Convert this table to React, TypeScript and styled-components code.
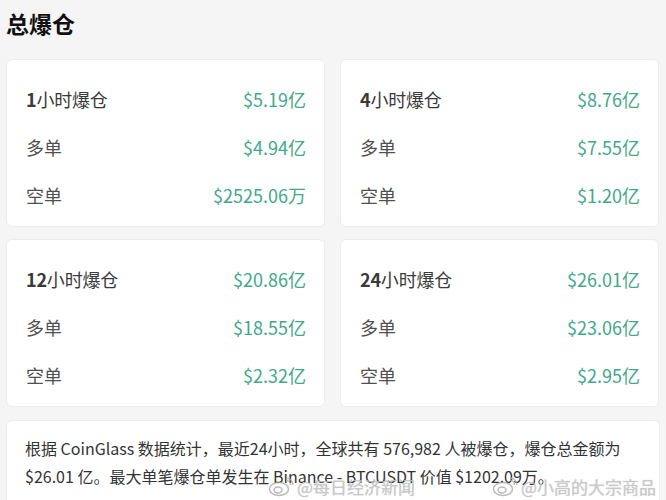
import styled, { createGlobalStyle } from "styled-components";

const GlobalStyle = createGlobalStyle`
  html, body {
    margin: 0;
    padding: 0;
    background: #f5f5f6;
  }
  body {
    font-family: "Noto Sans", "Noto Sans CJK SC", sans-serif;
  }
`;

const Page = styled.div`
  position: relative;
  width: 666px;
  height: 500px;
  overflow: hidden;
  padding: 0 6px;
  box-sizing: border-box;
`;

const Title = styled.h1`
  margin: 0;
  padding-top: 8px;
  height: 59px;
  box-sizing: border-box;
  font-size: 23px;
  font-weight: 700;
  line-height: 30px;
  color: #111;
  font-family: "Noto Sans CJK SC", sans-serif;
`;

const Grid = styled.div`
  display: grid;
  grid-template-columns: 319px 319px;
  column-gap: 15px;
  row-gap: 12px;
`;

const Card = styled.div`
  background: #fff;
  border: 1px solid #ececec;
  border-radius: 6px;
  height: 168px;
  box-sizing: border-box;
  padding: 15px 18px 0 19px;
  display: flex;
  flex-direction: column;
`;

const Row = styled.div`
  display: flex;
  justify-content: space-between;
  align-items: center;
  height: 48px;
  font-size: 18px;
  font-family: "Noto Sans CJK SC", sans-serif;
`;

const Label = styled.span<{ $head?: boolean }>`
  color: ${p => (p.$head ? "#3a3a3a" : "#505050")};
  letter-spacing: ${p => (p.$head ? "-0.2px" : "0")};
`;

const Num = styled.span`
  font-weight: 700;
`;

const Value = styled.span`
  color: #41a88a;
`;

const Note = styled.div`
  margin-top: 13px;
  background: #fff;
  border: 1px solid #ececec;
  border-radius: 6px;
  height: 100px;
  box-sizing: border-box;
  padding: 13px 18px 0 18px;
  font-size: 16px;
  line-height: 28px;
  color: #333;
  font-family: "Noto Sans CJK SC", sans-serif;
`;

const Mark = styled.div<{ $left: number }>`
  position: absolute;
  left: ${p => p.$left}px;
  top: 474px;
  display: flex;
  align-items: center;
  gap: 3px;
  font-size: 17px;
  color: rgba(200, 200, 200, 0.8);
  font-family: "Noto Sans CJK SC", sans-serif;
  text-shadow: 0 0 1px rgba(110, 110, 110, 0.4);
`;

type Item = { head: string; num: string; total: string; long: string; short: string };

const items: Item[] = [
  { num: "1", head: "小时爆仓", total: "$5.19亿", long: "$4.94亿", short: "$2525.06万" },
  { num: "4", head: "小时爆仓", total: "$8.76亿", long: "$7.55亿", short: "$1.20亿" },
  { num: "12", head: "小时爆仓", total: "$20.86亿", long: "$18.55亿", short: "$2.32亿" },
  { num: "24", head: "小时爆仓", total: "$26.01亿", long: "$23.06亿", short: "$2.95亿" },
];

function WeiboIcon() {
  return (
    <svg width="26" height="20" viewBox="0 0 26 20" fill="none" stroke="rgba(170,170,170,0.8)" strokeWidth="1.5">
      <ellipse cx="11" cy="12" rx="9.5" ry="6.5" />
      <ellipse cx="10" cy="13" rx="4" ry="3" />
      <path d="M18 3.5c2.5 0 4.5 2 4.5 4.5" />
      <path d="M18 1c4 0 7 3 7 7" />
    </svg>
  );
}

export default function App() {
  return (
    <Page>
      <GlobalStyle />
      <Title>总爆仓</Title>
      <Grid>
        {items.map(it => (
          <Card key={it.num}>
            <Row>
              <Label $head>
                <Num>{it.num}</Num>
                {it.head}
              </Label>
              <Value>{it.total}</Value>
            </Row>
            <Row>
              <Label>多单</Label>
              <Value>{it.long}</Value>
            </Row>
            <Row>
              <Label>空单</Label>
              <Value>{it.short}</Value>
            </Row>
          </Card>
        ))}
      </Grid>
      <Note>
        根据 CoinGlass 数据统计，最近24小时，全球共有 576,982 人被爆仓，爆仓总金额为
        <br />
        $26.01 亿。最大单笔爆仓单发生在 Binance - BTCUSDT 价值 $1202.09万。
      </Note>
      <Mark $left={268}>
        <WeiboIcon />
        @每日经济新闻
      </Mark>
      <Mark $left={492}>
        <WeiboIcon />
        @小高的大宗商品
      </Mark>
    </Page>
  );
}
